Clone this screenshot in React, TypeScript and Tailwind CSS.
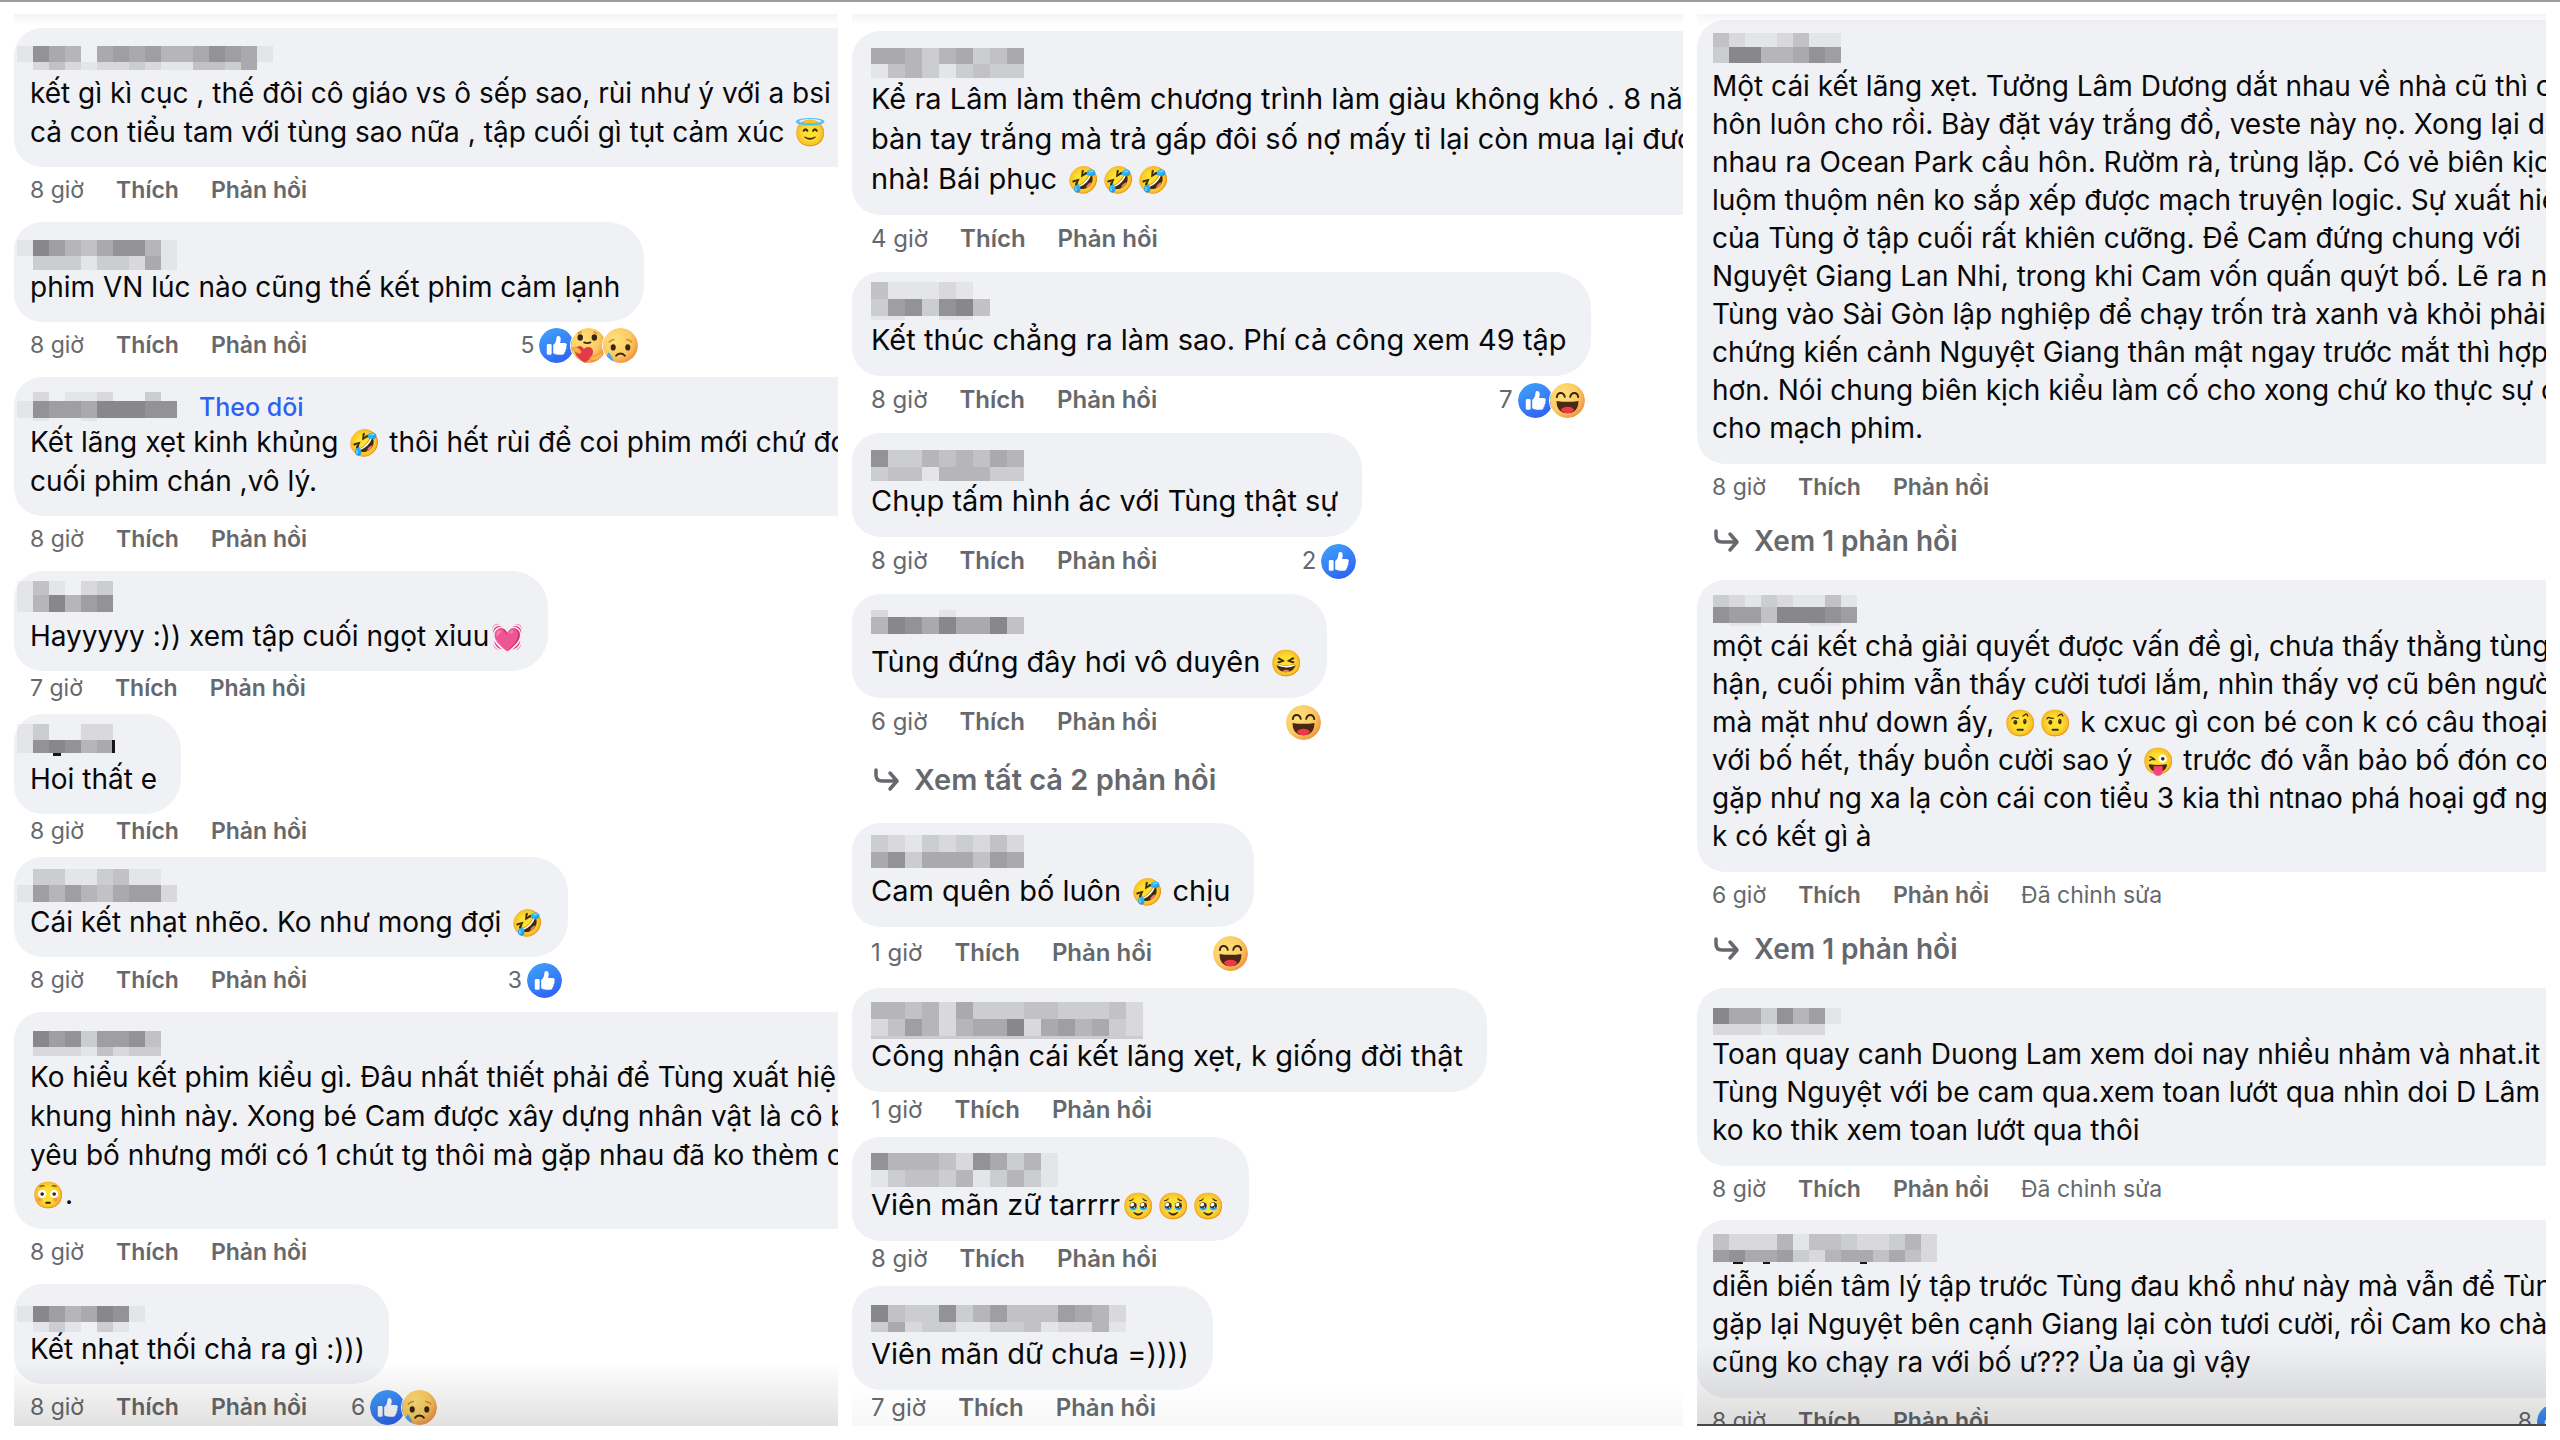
import { Fragment } from "react";

type Reaction = "like" | "care" | "sad" | "haha";
type Spacing = "short" | "normal" | "loose";

// A pixelated name: every row is a height and one shade (0-9) for each cell.
type Mosaic = {
  top: number;
  rows: [height: number, shades: string][];
  marks?: [x: number, y: number, w: number, h: number][];
};

type Comment = {
  id: string;
  name: Mosaic;
  follow?: boolean;
  lines: string[];
  wide?: boolean;
  time: string;
  edited?: boolean;
  count?: number;
  reactions?: Reaction[];
  spacing?: Spacing;
  replies?: string;
};

type Theme = {
  cell: number;
  panel: string;
  shade: string;
  name: string;
  bubble: string;
  text: string;
  meta: string;
  reply: string;
  row: Record<Spacing, string>;
  replyRow: string;
};

const LEFT: Comment[] = [
  {
    id: "l1",
    name: { top: 18, rows: [[16, "1865067675568761"], [8, "0242122321144360"]] },
    lines: [
      "kết gì kì cục , thế đôi cô giáo vs ô sếp sao, rùi như ý với a bsi ,",
      "cả con tiểu tam với tùng sao nữa , tập cuối gì tụt cảm xúc 😇",
    ],
    wide: true,
    time: "8 giờ",
  },
  {
    id: "l2",
    name: { top: 18, rows: [[16, "1975468851"], [14, "0333133261"]] },
    lines: ["phim VN lúc nào cũng thế kết phim cảm lạnh"],
    time: "8 giờ",
    count: 5,
    reactions: ["like", "care", "sad"],
  },
  {
    id: "l3",
    name: { top: 15, rows: [[9, "0201120030"], [17, "1877699988"], [3, "0100100000"]] },
    follow: true,
    lines: [
      "Kết lãng xẹt kinh khủng 🤣 thôi hết rùi để coi phim mới chứ đo",
      "cuối phim chán ,vô lý.",
    ],
    wide: true,
    time: "8 giờ",
  },
  {
    id: "l4",
    name: { top: 10, rows: [[14, "141023"], [17, "159578"]] },
    lines: ["Hayyyyy :)) xem tập cuối ngọt xỉuu💓"],
    time: "7 giờ",
    spacing: "short",
  },
  {
    id: "l5",
    name: {
      top: 10,
      rows: [[16, "130022"], [13, "189856"]],
      marks: [[95, 26, 3, 13], [36, 39, 8, 3]],
    },
    lines: ["Hoi thất e"],
    time: "8 giờ",
    spacing: "short",
  },
  {
    id: "l6",
    name: { top: 12, rows: [[16, "0331134110"], [17, "1757546772"]] },
    lines: ["Cái kết nhạt nhẽo. Ko như mong đợi 🤣"],
    time: "8 giờ",
    count: 3,
    reactions: ["like"],
  },
  {
    id: "l7",
    name: { top: 19, rows: [[16, "097837784"], [9, "022214233"]] },
    lines: [
      "Ko hiểu kết phim kiểu gì. Đâu nhất thiết phải để Tùng xuất hiệ",
      "khung hình này. Xong bé Cam được xây dựng nhân vật là cô b",
      "yêu bố nhưng mới có 1 chút tg thôi mà gặp nhau đã ko thèm c",
      "😳.",
    ],
    wide: true,
    time: "8 giờ",
  },
  {
    id: "l8",
    name: { top: 22, rows: [[16, "19756981"], [10, "01310310"]] },
    lines: ["Kết nhạt thối chả ra gì :)))"],
    time: "8 giờ",
    count: 6,
    reactions: ["like", "sad"],
  },
];

const MIDDLE: Comment[] = [
  {
    id: "m1",
    name: { top: 17, rows: [[16, "0665356346"], [14, "0145313433"]] },
    lines: [
      "Kể ra Lâm làm thêm chương trình làm giàu không khó . 8 nă",
      "bàn tay trắng mà trả gấp đôi số nợ mấy tỉ lại còn mua lại đượ",
      "nhà! Bái phục 🤣🤣🤣",
    ],
    wide: true,
    time: "4 giờ",
  },
  {
    id: "m2",
    name: { top: 10, rows: [[17, "04111210"], [17, "03783894"], [4, "01100110"]] },
    lines: ["Kết thúc chẳng ra làm sao. Phí cả công xem 49 tập"],
    time: "8 giờ",
    count: 7,
    reactions: ["like", "haha"],
  },
  {
    id: "m3",
    name: { top: 17, rows: [[17, "0833545465"], [14, "0344155533"]] },
    lines: ["Chụp tấm hình ác với Tùng thật sự"],
    time: "8 giờ",
    count: 2,
    reactions: ["like"],
  },
  {
    id: "m4",
    name: { top: 16, rows: [[7, "0200010000"], [17, "0598696694"]] },
    lines: ["Tùng đứng đây hơi vô duyên 😆"],
    time: "6 giờ",
    reactions: ["haha"],
    replies: "Xem tất cả 2 phản hồi",
  },
  {
    id: "m5",
    name: { top: 12, rows: [[17, "0321323242"], [16, "0683666476"]] },
    lines: ["Cam quên bố luôn 🤣 chịu"],
    time: "1 giờ",
    reactions: ["haha"],
    spacing: "loose",
  },
  {
    id: "m6",
    name: {
      top: 14,
      rows: [[17, "05545263334433342"], [17, "02475256692675632"], [3, "03333333333333333"]],
    },
    lines: ["Công nhận cái kết lãng xẹt, k giống đời thật"],
    time: "1 giờ",
    spacing: "short",
  },
  {
    id: "m7",
    name: { top: 16, rows: [[17, "085554286351"], [17, "013443513531"]] },
    lines: ["Viên mãn zữ tarrrr🥹🥹🥹"],
    time: "8 giờ",
    spacing: "short",
  },
  {
    id: "m8",
    name: { top: 19, rows: [[17, "0943383574447652"], [10, "0362331133412251"]] },
    lines: ["Viên mãn dữ chưa =))))"],
    time: "7 giờ",
    spacing: "short",
  },
];

const RIGHT: Comment[] = [
  {
    id: "r1",
    name: { top: 13, rows: [[14, "042112411"], [16, "039955687"]] },
    lines: [
      "Một cái kết lãng xẹt. Tưởng Lâm Dương dắt nhau về nhà cũ thì c",
      "hôn luôn cho rồi. Bày đặt váy trắng đồ, veste này nọ. Xong lại dẫ",
      "nhau ra Ocean Park cầu hôn. Rườm rà, trùng lặp. Có vẻ biên kịch",
      "luộm thuộm nên ko sắp xếp được mạch truyện logic. Sự xuất hiệ",
      "của Tùng ở tập cuối rất khiên cưỡng. Để Cam đứng chung với",
      "Nguyệt Giang Lan Nhi, trong khi Cam vốn quấn quýt bố. Lẽ ra nê",
      "Tùng vào Sài Gòn lập nghiệp để chạy trốn trà xanh và khỏi phải",
      "chứng kiến cảnh Nguyệt Giang thân mật ngay trước mắt thì hợp",
      "hơn. Nói chung biên kịch kiểu làm cố cho xong chứ ko thực sự đ",
      "cho mạch phim.",
    ],
    wide: true,
    time: "8 giờ",
    replies: "Xem 1 phản hồi",
  },
  {
    id: "r2",
    name: { top: 15, rows: [[12, "0321321141"], [16, "0877499987"], [3, "0011000110"]] },
    lines: [
      "một cái kết chả giải quyết được vấn đề gì, chưa thấy thằng tùng",
      "hận, cuối phim vẫn thấy cười tươi lắm, nhìn thấy vợ cũ bên ngườ",
      "mà mặt như down ấy, 🤨🤨 k cxuc gì con bé con k có câu thoại n",
      "với bố hết, thấy buồn cười sao ý 😜 trước đó vẫn bảo bố đón con",
      "gặp như ng xa lạ còn cái con tiểu 3 kia thì ntnao phá hoại gđ ng",
      "k có kết gì à",
    ],
    wide: true,
    time: "6 giờ",
    edited: true,
    replies: "Xem 1 phản hồi",
  },
  {
    id: "r3",
    name: { top: 20, rows: [[16, "096638571"], [11, "022212220"]] },
    lines: [
      "Toan quay canh Duong Lam xem doi nay nhiều nhảm và nhat.it c",
      "Tùng Nguyệt với be cam qua.xem toan lướt qua nhìn doi D Lâm c",
      "ko ko thik xem toan lướt qua thôi",
    ],
    wide: true,
    time: "8 giờ",
    edited: true,
  },
  {
    id: "r4",
    name: {
      top: 14,
      rows: [[16, "042225144322352"], [12, "078667325664642"]],
      marks: [[36, 42, 10, 2], [66, 42, 7, 2], [163, 42, 7, 2]],
    },
    lines: [
      "diễn biến tâm lý tập trước Tùng đau khổ như này mà vẫn để Tùn",
      "gặp lại Nguyệt bên cạnh Giang lại còn tươi cười, rồi Cam ko chào",
      "cũng ko chạy ra với bố ư??? Ủa ủa gì vậy",
    ],
    wide: true,
    time: "8 giờ",
    count: 8,
    reactions: ["like"],
  },
];

const THEMES: Record<"left" | "middle" | "right", Theme> = {
  left: {
    cell: 16,
    panel: "pt-[14px]",
    shade: "h-16 from-black/12",
    name: "h-[46px] pl-[3px]",
    bubble: "pb-[15px]",
    text: "pl-4 pr-6 text-[28px] leading-[39px]",
    meta: "pl-4 text-[23px]",
    reply: "pl-4 text-[28px]",
    row: { short: "h-[34px] mb-[9px]", normal: "h-[46px] mb-[9px]", loose: "h-[52px] mb-[9px]" },
    replyRow: "",
  },
  middle: {
    cell: 17,
    panel: "pt-[17px]",
    shade: "h-10 from-black/3",
    name: "h-[48px] pl-[2px]",
    bubble: "pb-4",
    text: "pl-[19px] pr-6 text-[29px] leading-[40px]",
    meta: "pl-[19px] text-[24px]",
    reply: "pl-5 text-[29px]",
    row: { short: "h-[36px] mb-[9px]", normal: "h-[48px] mb-[9px]", loose: "h-[52px] mb-[9px]" },
    replyRow: "h-[68px] mb-[9px] -mt-[9px]",
  },
  right: {
    cell: 16,
    panel: "pt-[6px]",
    shade: "h-20 from-black/14",
    name: "h-[47px]",
    bubble: "pb-[17px]",
    text: "px-[15px] text-[28px] leading-[38px]",
    meta: "pl-[15px] text-[23px]",
    reply: "pl-[15px] text-[28px]",
    row: { short: "h-[34px] mb-[8px]", normal: "h-[46px] mb-[8px]", loose: "h-[52px] mb-[8px]" },
    replyRow: "h-[62px] mb-[8px] -mt-[8px]",
  },
};

function HiddenName({ mosaic, cell }: { mosaic: Mosaic; cell: number }) {
  const width = Math.max(...mosaic.rows.map(([, shades]) => shades.length)) * cell;
  let y = mosaic.top;

  return (
    <svg width={width} height={44} className="overflow-visible shrink-0" shapeRendering="crispEdges" aria-hidden="true">
      {mosaic.rows.map(([height, shades], r) => {
        const rowY = y;
        y += height;
        return (
          <Fragment key={r}>
            {shades.split("").map((shade, c) =>
              shade === "0" ? null : (
                <rect
                  key={c}
                  x={c * cell}
                  y={rowY}
                  width={cell}
                  height={height}
                  fill="#7c7c7e"
                  opacity={Number(shade) / 10}
                />
              ),
            )}
          </Fragment>
        );
      })}
      {mosaic.marks?.map(([mx, my, w, h]) => (
        <rect key={`${mx}-${my}`} x={mx} y={my} width={w} height={h} fill="#161616" />
      ))}
    </svg>
  );
}

function Face() {
  return <circle cx="18" cy="18" r="18" fill="url(#face)" />;
}

function ReactionIcon({ kind }: { kind: Reaction }) {
  return (
    <svg viewBox="0 0 36 36" role="img" aria-label={kind} className="size-[35px] shrink-0 rounded-full ring-1 ring-white">
      {kind === "like" && (
        <>
          <circle cx="18" cy="18" r="18" fill="url(#like)" />
          <rect x="8" y="16.5" width="5" height="11" rx="1.4" fill="#fff" />
          <path
            d="M14.6 17.6c2.2-1.6 3-3.7 3.2-6.2.1-2 .6-3.3 2-3.3 1.8 0 2.7 1.6 2.5 3.900-.1 1.300-.4 2.400-.7 3.400h4.700c1.700 0 2.600 1.200 2.200 2.500-.1.500-.4.900-.7 1.100.5.5.6 1.200.4 1.900-.2.600-.6 1-1 1.200.3.500.3 1 .1 1.600-.2.600-.6.900-1.100 1.100.1.400.1.800 0 1.200-.3.900-1.100 1.400-2.300 1.400h-4.200c-2.200 0-3.700-.5-5.100-1.400z"
            fill="#fff"
          />
        </>
      )}
      {kind === "haha" && (
        <>
          <Face />
          <path d="M7 14.500c.8-5.500 7-5.500 8.200-.2M20.800 14.300c1.200-5.300 7.400-5.300 8.200.2" fill="none" stroke="#3b2412" strokeWidth="2" strokeLinecap="round" />
          <path d="M6.800 18.500c7 1.200 15.400 1.200 22.400 0 .5 7.500-4 12.700-11.200 12.700S6.300 26 6.800 18.500z" fill="#4b2813" />
          <path d="M11.200 27.500c2-4 11.600-4 13.600 0-1.700 2.400-4 3.700-6.800 3.700s-5.100-1.300-6.800-3.700z" fill="#f0384a" />
        </>
      )}
      {kind === "sad" && (
        <>
          <Face />
          <path d="M6.500 14.500c1.500-1.800 3-2.600 5-2.700M24.500 11.800c2 .1 3.500.9 5 2.700" fill="none" stroke="#d98a2b" strokeWidth="1.6" strokeLinecap="round" />
          <ellipse cx="10.5" cy="20" rx="2.6" ry="3.2" fill="#3b2412" />
          <ellipse cx="25.5" cy="20" rx="2.6" ry="3.2" fill="#3b2412" />
          <path d="M13.500 28.500c2-3 7-3 9 0" fill="none" stroke="#3b2412" strokeWidth="2" strokeLinecap="round" />
          <path d="M6 25c2.500 3.300 4.300 5.600 4.300 7.800A4.300 4.300 0 0 1 1.700 32.800C1.700 30.600 3.500 28.300 6 25z" fill="#4fa6ec" />
        </>
      )}
      {kind === "care" && (
        <>
          <Face />
          <path d="M7.500 5.500l3-1.300M23.500 4.200l3 1.300" stroke="#d98a2b" strokeWidth="1.6" strokeLinecap="round" />
          <ellipse cx="9.5" cy="9.8" rx="2.8" ry="3.3" fill="#3b2412" />
          <ellipse cx="24" cy="9.8" rx="2.8" ry="3.3" fill="#3b2412" />
          <path d="M13.500 14.800c2 .8 4.500.8 6.500 0" fill="none" stroke="#3b2412" strokeWidth="1.8" strokeLinecap="round" />
          <path d="M14.500 36C8 31.500 2.500 27 4.500 21.500c1.600-4 7-4 8.700.2 3-3.500 8.800-2.700 9.400 1.800.7 5-3.600 9-8.100 12.500z" fill="#e23a4b" />
          <path d="M2 20.500c3-1.500 7 .2 8.300 3.400.6 1.700-.5 2.600-2 2.200-2.700-.7-4.500-2-6.300-3.600zM33 22c-2.200 4.500-6.300 6.700-11.200 7-2.300.2-3 2.600-1.200 3.900 3.500 2.300 9.200-.2 11.600-3.900z" fill="#f8b34c" stroke="#e58d32" strokeWidth=".8" />
        </>
      )}
    </svg>
  );
}

function IconDefs() {
  return (
    <svg className="absolute size-0" aria-hidden="true">
      <defs>
        <linearGradient id="like" x1="0.2" y1="0" x2="0.7" y2="1">
          <stop offset="0" stopColor="#3fa0fb" />
          <stop offset="1" stopColor="#2f62f4" />
        </linearGradient>
        <radialGradient id="face" cx="0.35" cy="0.35" r="0.75">
          <stop offset="0" stopColor="#ffe27a" />
          <stop offset="0.6" stopColor="#fbcb62" />
          <stop offset="1" stopColor="#f0883c" />
        </radialGradient>
      </defs>
    </svg>
  );
}

function Line({ text }: { text: string }) {
  return (
    <p>
      {text.split(/(\p{Extended_Pictographic})/u).map((part, i) =>
        i % 2 === 1 ? (
          <span key={i} className="inline-block w-[35px] text-center text-[26px] leading-none">
            {part}
          </span>
        ) : (
          part
        ),
      )}
    </p>
  );
}

function CommentItem({ comment, theme }: { comment: Comment; theme: Theme }) {
  const { reactions, spacing = "normal" } = comment;

  return (
    <article className={comment.wide ? "w-[calc(100%+32px)] shrink-0" : "w-fit shrink-0"}>
      <div
        className={[
          "bg-[#f0f1f5] text-[#080809]",
          comment.wide ? "rounded-l-[28px]" : "w-fit rounded-l-[28px] rounded-r-[36px]",
          theme.bubble,
        ].join(" ")}
      >
        <div className={`flex ${theme.name}`}>
          <HiddenName mosaic={comment.name} cell={theme.cell} />
          {comment.follow && (
            <a href="#follow" className="ml-[22px] pt-[12px] text-[25px] leading-[36px] font-medium text-[#2b62f0]">
              Theo dõi
            </a>
          )}
        </div>
        <div className={theme.text}>
          {comment.lines.map((line) => (
            <Line key={line} text={line} />
          ))}
        </div>
      </div>

      <div className={`flex items-center gap-8 pr-[6px] text-[#65686c] ${theme.meta} ${theme.row[spacing]}`}>
        <span>{comment.time}</span>
        <button type="button" className="font-semibold">
          Thích
        </button>
        <button type="button" className="font-semibold">
          Phản hồi
        </button>
        {comment.edited && <span>Đã chỉnh sửa</span>}
        {reactions && (
          <div className="ml-auto flex items-center gap-[5px] pl-[12px]">
            {comment.count && <span>{comment.count}</span>}
            {/* reversed, so that the first icon lies on top of the next */}
            <div className="flex flex-row-reverse -space-x-[3px] space-x-reverse">
              {[...reactions].reverse().map((kind) => (
                <ReactionIcon key={kind} kind={kind} />
              ))}
            </div>
          </div>
        )}
      </div>

      {comment.replies && (
        <button
          type="button"
          className={`flex items-center gap-[14px] font-semibold text-[#65686c] ${theme.reply} ${theme.replyRow}`}
        >
          <svg width="28" height="24" viewBox="0 0 28 24" fill="none" stroke="currentColor" strokeWidth="3.5" strokeLinecap="round" strokeLinejoin="round" aria-hidden="true">
            <path d="M4 2v5c0 4 2 6 6 6h14" />
            <path d="M18 5l7 8-7 8" />
          </svg>
          {comment.replies}
        </button>
      )}
    </article>
  );
}

function Panel({ comments, theme, ruled }: { comments: Comment[]; theme: Theme; ruled?: boolean }) {
  return (
    <section
      className={[
        "relative flex min-w-0 flex-col overflow-hidden bg-white whitespace-pre",
        ruled ? "border-b-2 border-[#4a4644]" : "",
        theme.panel,
      ].join(" ")}
    >
      {comments.map((comment) => (
        <CommentItem key={comment.id} comment={comment} theme={theme} />
      ))}
      <div className="pointer-events-none absolute inset-x-0 top-0 h-3 bg-linear-to-b from-black/4 to-transparent" />
      <div className={`pointer-events-none absolute inset-x-0 bottom-0 bg-linear-to-t to-transparent ${theme.shade}`} />
    </section>
  );
}

export default function App() {
  return (
    <main className="grid h-screen grid-cols-[824fr_831fr_849fr] grid-rows-[minmax(0,1fr)] gap-[14px] border-t-2 border-[#9b9b9d] bg-white px-[14px] pt-[12px] pb-[14px] font-[Inter,sans-serif]">
      <IconDefs />
      <Panel comments={LEFT} theme={THEMES.left} />
      <Panel comments={MIDDLE} theme={THEMES.middle} />
      <Panel comments={RIGHT} theme={THEMES.right} ruled />
    </main>
  );
}
